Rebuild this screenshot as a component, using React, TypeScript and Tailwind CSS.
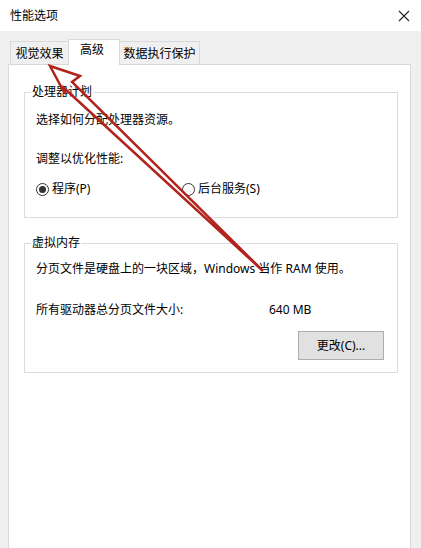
import React from "react";

const font = { fontFamily: "'Noto Sans', 'Noto Sans CJK SC', sans-serif" };

function Radio({ checked }: { checked?: boolean }) {
  return (
    <span className="flex h-[13px] w-[13px] items-center justify-center rounded-full border border-[#333] bg-white">
      {checked && <span className="h-[7px] w-[7px] rounded-full bg-[#333]" />}
    </span>
  );
}

export default function App() {
  return (
    <div className="relative h-[548px] w-[421px] overflow-hidden bg-[#f0f0f0] text-[12px] leading-[16px] text-black" style={font}>
      {/* title bar */}
      <div className="flex h-[31px] items-center justify-between bg-white pl-[10px] pr-[11px]">
        <span>性能选项</span>
        <svg width="12" height="12" viewBox="0 0 12 12">
          <path d="M1 1 L11 11 M11 1 L1 11" stroke="#222" strokeWidth="1.1" fill="none" />
        </svg>
      </div>
      {/* body */}
      <div className="flex flex-col pl-[8px] pt-[9px]">
        {/* tabs */}
        <div className="relative z-10 flex h-[24px] items-end pl-[2px]">
          <div className="flex h-[23px] w-[59px] items-center justify-center border border-b-0 border-[#d9d9d9] bg-[#f0f0f0] pt-[1px]">
            视觉效果
          </div>
          <div className="-ml-[1px] -mb-[1px] flex h-[26px] w-[52px] items-start justify-center border border-b-0 border-[#d9d9d9] bg-white pt-[2px]">
            <span className="-ml-[4px]">高级</span>
          </div>
          <div className="-ml-[1px] flex h-[23px] w-[81px] items-center justify-center border border-b-0 border-[#d9d9d9] bg-[#f0f0f0] pt-[1px]">
            数据执行保护
          </div>
        </div>
        {/* panel */}
        <div className="flex h-[500px] w-[403px] flex-col border border-[#d9d9d9] bg-white">
          {/* group 1 */}
          <div className="relative ml-[15px] mt-[27px] flex h-[126px] w-[374px] flex-col border border-[#dcdcdc] pl-[11px] pt-[19px]">
            <span className="absolute -top-[9px] left-[6px] bg-white px-[1px]">处理器计划</span>
            <div>选择如何分配处理器资源。</div>
            <div className="mt-[23px]">调整以优化性能:</div>
            <div className="mt-[14px] flex items-center">
              <Radio checked />
              <span className="ml-[3px] w-[130px]">程序(P)</span>
              <Radio />
              <span className="ml-[3px]">后台服务(S)</span>
            </div>
          </div>
          {/* group 2 */}
          <div className="relative ml-[15px] mt-[25px] flex h-[130px] w-[374px] flex-col border border-[#dcdcdc] pl-[11px] pt-[17px]">
            <span className="absolute -top-[9px] left-[6px] bg-white px-[1px]">虚拟内存</span>
            <div>分页文件是硬盘上的一块区域，Windows 当作 RAM 使用。</div>
            <div className="mt-[25px] flex">
              <span className="w-[233px]">所有驱动器总分页文件大小:</span>
              <span>640 MB</span>
            </div>
            <div className="mr-[13px] mt-[13px] flex justify-end">
              <div className="flex h-[29px] w-[86px] items-center justify-center border border-[#adadad] bg-[#e1e1e1]">
                更改(C)...
              </div>
            </div>
          </div>
        </div>
      </div>
      {/* annotation arrow */}
      <svg className="pointer-events-none absolute left-0 top-0" width="421" height="548" viewBox="0 0 421 548">
        <polygon
          points="50,66 80,76 72,82 263,271 64,88 65,94"
          fill="none"
          stroke="#b3231d"
          strokeWidth="2.5"
          strokeLinejoin="miter"
        />
      </svg>
    </div>
  );
}
